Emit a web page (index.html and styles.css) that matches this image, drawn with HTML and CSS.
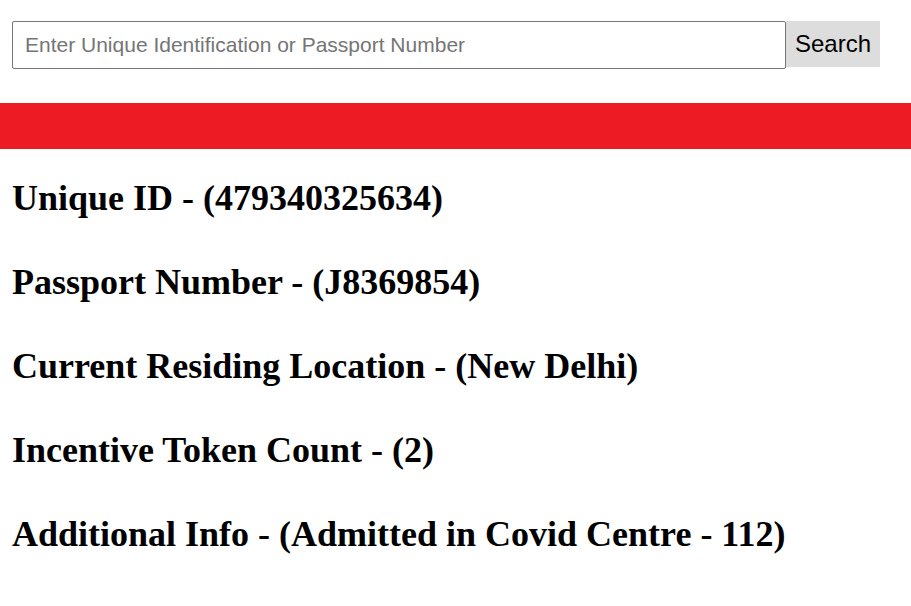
FILE: index.html
```html
<!DOCTYPE html>
<html>
<head>
<meta charset="utf-8">
<link rel="stylesheet" href="styles.css">
</head>
<body>
<form class="search-row">
  <input class="search-input" type="text" placeholder="Enter Unique Identification or Passport Number">
  <button class="search-btn" type="button">Search</button>
</form>
<div class="banner"></div>
<div class="details">
  <h2 class="detail">Unique ID - (479340325634)</h2>
  <h2 class="detail">Passport Number - (J8369854)</h2>
  <h2 class="detail">Current Residing Location - (New Delhi)</h2>
  <h2 class="detail">Incentive Token Count - (2)</h2>
  <h2 class="detail">Additional Info - (Admitted in Covid Centre - 112)</h2>
</div>
</body>
</html>
```
FILE: styles.css
```css
html, body {
  margin: 0;
  padding: 0;
  background: #fff;
}
.search-row {
  display: flex;
  align-items: flex-start;
  padding: 21px 12px 0;
  margin: 0;
}
.search-input {
  box-sizing: border-box;
  width: 774px;
  height: 48px;
  border: 1px solid #767676;
  border-radius: 2px;
  padding: 0 12px;
  font-family: "Liberation Sans", Arial, sans-serif;
  font-size: 21px;
  color: #000;
  margin: 0;
}
.search-input::placeholder {
  color: #757575;
}
.search-btn {
  box-sizing: border-box;
  width: 94px;
  height: 46px;
  border: none;
  background: #dddddd;
  font-family: "Liberation Sans", Arial, sans-serif;
  font-size: 24px;
  color: #000;
  padding: 0;
  margin: 0;
}
.banner {
  height: 46px;
  background: #ed1c24;
  margin-top: 34px;
}
.details {
  padding: 0 12px;
}
.detail {
  font-family: "Liberation Serif", "Times New Roman", serif;
  font-weight: bold;
  font-size: 36px;
  line-height: 40px;
  margin: 29px 0 44px;
  color: #000;
}
```
